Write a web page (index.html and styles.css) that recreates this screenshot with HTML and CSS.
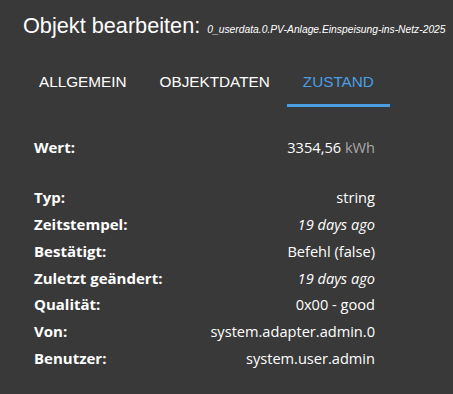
FILE: index.html
```html
<!DOCTYPE html>
<html lang="de">
<head>
    <meta charset="UTF-8">
    <meta name="viewport" content="width=device-width, initial-scale=1.0">
    <title>Objekt bearbeiten</title>
    <link rel="stylesheet" href="styles.css">
</head>
<body>
    <div class="dialog">
        <h2 class="title">Objekt bearbeiten: <span class="obj-id">0_userdata.0.PV-Anlage.Einspeisung-ins-Netz-2025</span></h2>
        <div class="tabs">
            <div class="tab">Allgemein</div>
            <div class="tab">Objektdaten</div>
            <div class="tab active">Zustand</div>
        </div>
        <div class="state">
            <div class="row">
                <span class="label">Wert:</span>
                <span class="value">3354,56 <span class="unit">kWh</span></span>
            </div>
            <div class="row empty"></div>
            <div class="row">
                <span class="label">Typ:</span>
                <span class="value">string</span>
            </div>
            <div class="row">
                <span class="label">Zeitstempel:</span>
                <span class="value ago">19 days ago</span>
            </div>
            <div class="row">
                <span class="label">Bestätigt:</span>
                <span class="value">Befehl (false)</span>
            </div>
            <div class="row">
                <span class="label">Zuletzt geändert:</span>
                <span class="value ago">19 days ago</span>
            </div>
            <div class="row">
                <span class="label">Qualität:</span>
                <span class="value">0x00 - good</span>
            </div>
            <div class="row">
                <span class="label">Von:</span>
                <span class="value">system.adapter.admin.0</span>
            </div>
            <div class="row">
                <span class="label">Benutzer:</span>
                <span class="value">system.user.admin</span>
            </div>
        </div>
    </div>
</body>
</html>
```

FILE: styles.css
```css
*{
    margin: 0;
    padding: 0;
    box-sizing: border-box;
}
body{
    background-color: #393939;
    color: #ffffff;
    font-family: "Liberation Sans", Arial, sans-serif;
}
.dialog{
    padding: 12px 0 0 23px;
}
.title{
    font-weight: normal;
    font-size: 21.7px;
    line-height: 28px;
    white-space: nowrap;
}
.obj-id{
    font-size: 10.3px;
    font-style: italic;
    margin-left: 1px;
}
.tabs{
    display: flex;
    margin-top: 15px;
}
.tab{
    padding: 14px 16px 13px;
    font-size: 15.3px;
    line-height: 18px;
    text-transform: uppercase;
    border-bottom: 3px solid transparent;
    margin-right: 1px;
}
.tab.active{
    color: #4a9fe3;
    border-bottom-color: #4a9fe3;
}
.state{
    width: 341px;
    margin: 27px 0 0 11px;
    font-family: "Open Sans", "Noto Sans", sans-serif;
    font-size: 14.6px;
}
.row{
    display: flex;
    justify-content: space-between;
    height: 26.8px;
    line-height: 26px;
}
.row.empty{
    height: 23.5px;
}
.label{
    font-weight: bold;
    font-size: 15px;
}
.ago{
    font-style: italic;
}
.unit{
    color: #a8a8a8;
}
```
